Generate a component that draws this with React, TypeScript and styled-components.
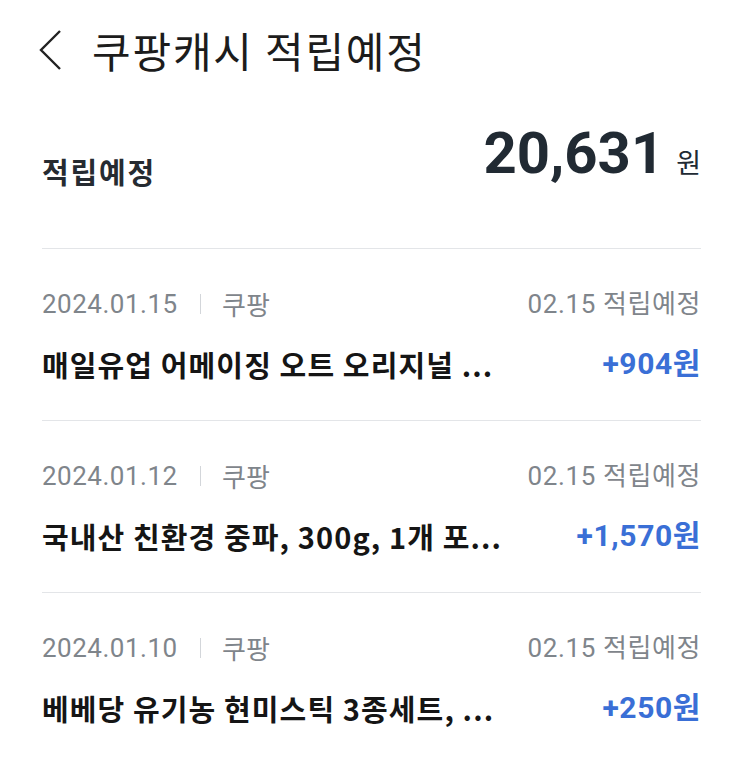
import React from "react";
import styled, { createGlobalStyle } from "styled-components";

const Global = createGlobalStyle`
  html, body { margin: 0; padding: 0; background: #fff; }
  body { font-family: Roboto, "Noto Sans CJK KR", sans-serif; }
`;

const Page = styled.div`
  width: 743px;
  height: 764px;
  overflow: hidden;
  background: #fff;
  padding: 0 42px 0 42px;
  box-sizing: border-box;
`;

const Header = styled.header`
  display: flex;
  align-items: center;
  height: 100px;
  gap: 26px;
  margin-left: -6px;
`;

const BackBtn = styled.button`
  border: 0;
  background: none;
  padding: 0;
  width: 30px;
  height: 44px;
  display: flex;
  align-items: center;
  justify-content: center;
`;

const Title = styled.h1`
  margin: 0;
  font-family: "Noto Sans CJK KR", sans-serif;
  font-weight: 400;
  font-size: 42px;
  color: #1c1c1c;
  letter-spacing: 1.8px;
  line-height: 1;
`;

const Summary = styled.section`
  display: flex;
  justify-content: space-between;
  align-items: flex-end;
  height: 149px;
  padding-bottom: 66px;
  box-sizing: border-box;
  border-bottom: 1.5px solid #e3e5e8;
`;

const SummaryLabel = styled.span`
  font-family: "Noto Sans CJK KR", sans-serif;
  font-weight: 700;
  font-size: 29px;
  color: #262b31;
  line-height: 1;
  letter-spacing: 1.8px;
  margin-bottom: -4px;
`;

const Total = styled.div`
  display: flex;
  align-items: baseline;
  gap: 12px;
  color: #212a33;
`;

const TotalNum = styled.span`
  font-family: Roboto, sans-serif;
  font-weight: 700;
  font-size: 58px;
  line-height: 1;
  letter-spacing: 0px;
`;

const Won = styled.span`
  font-family: "Noto Sans CJK KR", sans-serif;
  font-weight: 400;
  font-size: 27px;
  line-height: 1;
`;

const Item = styled.div`
  height: 172px;
  box-sizing: border-box;
  border-bottom: 1.5px solid #e3e5e8;
  display: flex;
  flex-direction: column;
  padding-top: 38px;
  gap: 26px;
`;

const Row = styled.div`
  display: flex;
  justify-content: space-between;
  align-items: center;
`;

const Meta = styled.div`
  display: flex;
  align-items: center;
  color: #7f858b;
  font-size: 26px;
  line-height: 34px;
  font-family: Roboto, "Noto Sans CJK KR", sans-serif;
`;

const DateText = styled.span`
  letter-spacing: 0.5px;
`;

const Sep = styled.span`
  width: 1.5px;
  height: 20px;
  background: #d3d6da;
  margin: 0 21px 0 22px;
`;

const Store = styled.span`
  font-family: "Noto Sans CJK KR", sans-serif;
  font-size: 26px;
`;

const Due = styled.span`
  color: #7f858b;
  font-size: 26px;
  line-height: 34px;
  letter-spacing: 0.6px;
  font-family: Roboto, "Noto Sans CJK KR", sans-serif;
`;

const Name = styled.span`
  font-family: "Noto Sans CJK KR", sans-serif;
  font-weight: 700;
  font-size: 29px;
  color: #151515;
  line-height: 34px;
  letter-spacing: 1.1px;
`;

const Amount = styled.span`
  font-family: Roboto, "Noto Sans CJK KR", sans-serif;
  font-weight: 700;
  font-size: 30px;
  color: #3a6fd6;
  line-height: 34px;
  letter-spacing: 0.6px;
`;

const items = [
  { date: "2024.01.15", name: "매일유업 어메이징 오트 오리지널 ...", amount: "+904원" },
  { date: "2024.01.12", name: "국내산 친환경 중파, 300g, 1개 포...", amount: "+1,570원" },
  { date: "2024.01.10", name: "베베당 유기농 현미스틱 3종세트, ...", amount: "+250원" },
];

export default function App() {
  return (
    <>
      <Global />
      <Page>
        <Header>
          <BackBtn aria-label="back">
            <svg width="26" height="42" viewBox="0 0 26 42">
              <polyline points="22,2 3,21 22,40" fill="none" stroke="#222" strokeWidth="2.4" />
            </svg>
          </BackBtn>
          <Title>쿠팡캐시 적립예정</Title>
        </Header>
        <Summary>
          <SummaryLabel>적립예정</SummaryLabel>
          <Total>
            <TotalNum>20,631</TotalNum>
            <Won>원</Won>
          </Total>
        </Summary>
        {items.map((it) => (
          <Item key={it.date}>
            <Row>
              <Meta>
                <DateText>{it.date}</DateText>
                <Sep />
                <Store>쿠팡</Store>
              </Meta>
              <Due>02.15 적립예정</Due>
            </Row>
            <Row>
              <Name>{it.name}</Name>
              <Amount>{it.amount}</Amount>
            </Row>
          </Item>
        ))}
      </Page>
    </>
  );
}
